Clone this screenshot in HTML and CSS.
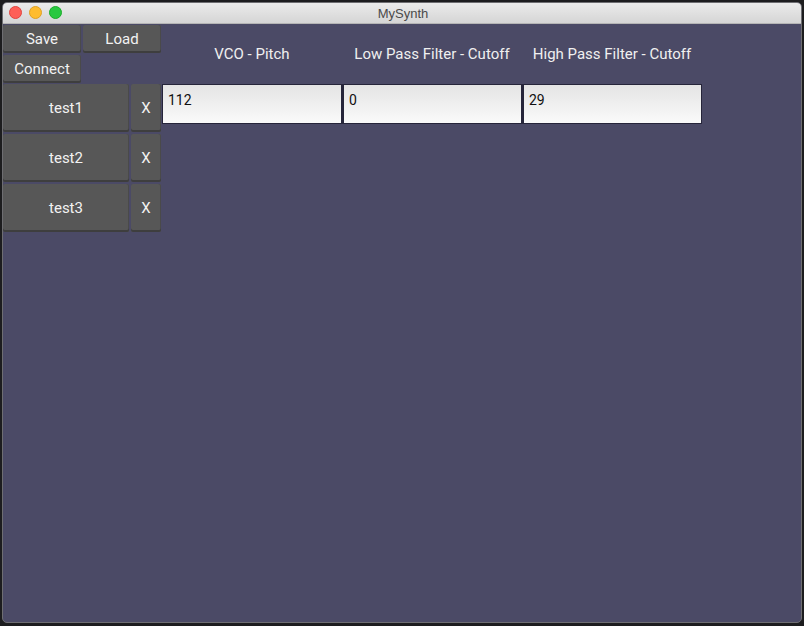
FILE: index.html
```html
<!DOCTYPE html>
<html>
<head>
<meta charset="utf-8">
<link rel="stylesheet" href="styles.css">
<title>MySynth</title>
</head>
<body>
<div class="window">
  <div class="titlebar">
    <div class="lights">
      <span class="light red"></span>
      <span class="light yellow"></span>
      <span class="light green"></span>
    </div>
    <div class="title">MySynth</div>
  </div>
  <div class="content">
    <div class="header">
      <div class="filebtns">
        <div class="btn">Save</div>
        <div class="btn">Load</div>
        <div class="btn">Connect</div>
      </div>
      <div class="label">VCO - Pitch</div>
      <div class="label">Low Pass Filter - Cutoff</div>
      <div class="label">High Pass Filter - Cutoff</div>
    </div>
    <div class="rows">
      <div class="row">
        <div class="btn preset">test1</div>
        <div class="btn del">X</div>
        <div class="field">112</div>
        <div class="field">0</div>
        <div class="field">29</div>
      </div>
      <div class="row">
        <div class="btn preset">test2</div>
        <div class="btn del">X</div>
      </div>
      <div class="row">
        <div class="btn preset">test3</div>
        <div class="btn del">X</div>
      </div>
    </div>
  </div>
</div>
</body>
</html>
```
FILE: styles.css
```css
html, body {
  margin: 0;
  padding: 0;
  background: #1d1d1f;
  width: 804px;
  height: 626px;
  overflow: hidden;
}
body {
  padding: 2px 0 0 2px;
  box-sizing: border-box;
  font-family: Roboto, "Liberation Sans", sans-serif;
}
.window {
  width: 800px;
  height: 621px;
  box-sizing: border-box;
  border: 1px solid #6e6e72;
  border-radius: 5px;
  overflow: hidden;
  display: flex;
  flex-direction: column;
  background: #4b4a66;
}
.titlebar {
  height: 20px;
  flex: none;
  position: relative;
  background: linear-gradient(#ebebeb, #d5d5d5);
  border-bottom: 1px solid #b5b5b5;
  display: flex;
  align-items: center;
  justify-content: center;
}
.lights {
  position: absolute;
  left: 6px;
  top: 3px;
  display: flex;
  gap: 7px;
}
.light {
  width: 13px;
  height: 13px;
  border-radius: 50%;
  box-sizing: border-box;
}
.red { background: #fe5f57; border: 1px solid #e0443e; }
.yellow { background: #febc2e; border: 1px solid #dea123; }
.green { background: #28c840; border: 1px solid #1aab29; }
.title {
  font-family: "Liberation Sans", sans-serif;
  font-size: 13px;
  color: #4a4a4a;
  padding-left: 2px;
}
.content {
  flex: 1;
  padding-top: 1px;
  display: flex;
  flex-direction: column;
}
.header {
  display: flex;
  height: 59px;
}
.filebtns {
  width: 159px;
  display: grid;
  grid-template-columns: 78px 78px;
  grid-template-rows: 28px 28px;
  column-gap: 2px;
  row-gap: 2px;
  align-content: start;
}
.btn {
  background: #575757;
  color: #f2f2f2;
  font-size: 15px;
  display: flex;
  align-items: center;
  justify-content: center;
  border-radius: 2px;
  box-shadow: inset 0 -2px 0 #3e3e3e, inset -1px 0 0 #4a4a4a;
  padding-bottom: 1px;
  box-sizing: border-box;
}
.label {
  width: 180px;
  display: flex;
  align-items: center;
  justify-content: center;
  color: #f0f0f0;
  font-size: 15px;
  padding-bottom: 2px;
  box-sizing: border-box;
}
.rows {
  display: flex;
  flex-direction: column;
  gap: 2px;
}
.row {
  display: flex;
  height: 48px;
  align-items: flex-start;
}
.preset {
  width: 126px;
  height: 48px;
  margin-right: 2px;
}
.del {
  width: 30px;
  height: 48px;
  margin-right: 1px;
}
.field {
  width: 180px;
  height: 40px;
  box-sizing: border-box;
  border: 1px solid #26253a;
  background: linear-gradient(#e4e4e4, #fafafa);
  color: #111;
  font-size: 14px;
  padding: 7px 0 0 5px;
  margin-right: 0;
}
.field + .field {
  border-left-width: 2px;
}
```
